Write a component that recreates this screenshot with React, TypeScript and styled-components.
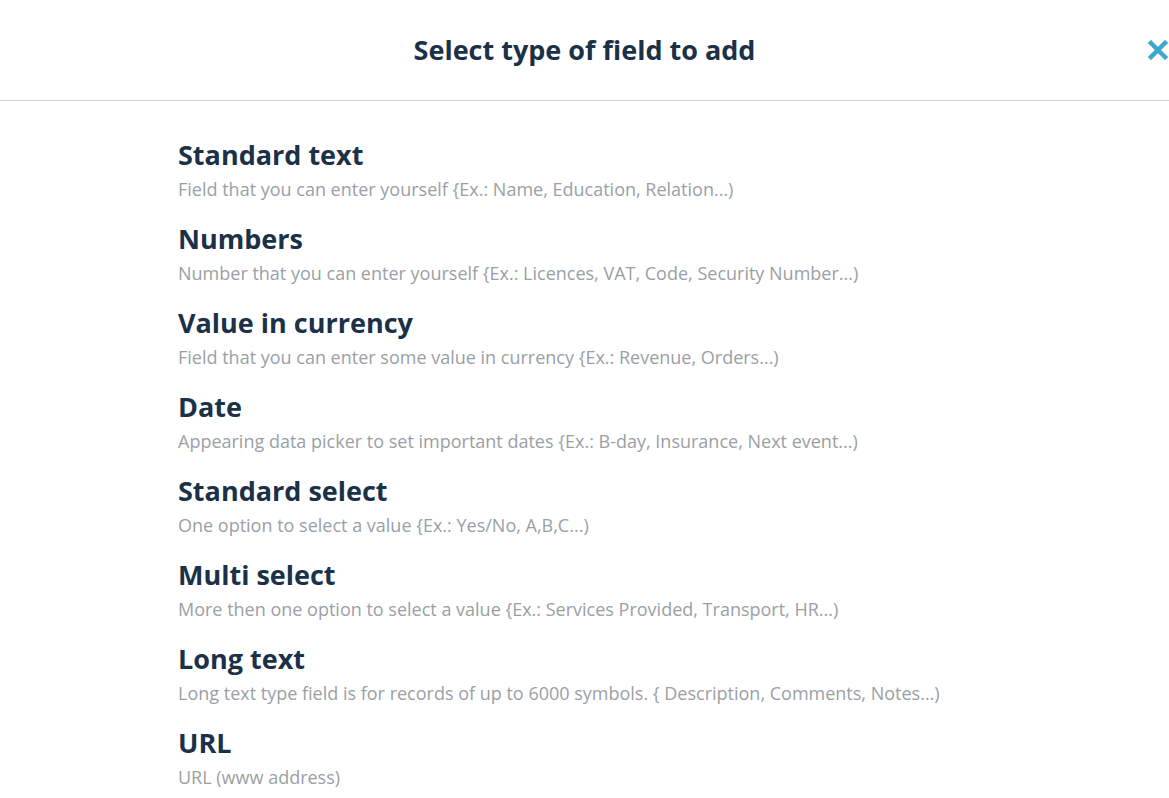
import React from 'react'
import styled, { createGlobalStyle } from 'styled-components'

const Colors = {
  Navy: '#1b3148',
  Grey: '#9a9fa5',
  Line: '#d0d0d0',
  Blue: '#3ea6d1',
  White: '#ffffff',
}

const GlobalStyle = createGlobalStyle`
  html, body {
    margin: 0;
    padding: 0;
    background: ${Colors.White};
    font-family: 'Open Sans', 'Noto Sans', sans-serif;
  }
`

const Page = styled.div`
  width: 1169px;
  height: 798px;
  overflow: hidden;
`

const Header = styled.div`
  position: relative;
  height: 101px;
  border-bottom: 1px solid ${Colors.Line};
  display: flex;
  align-items: center;
  justify-content: center;
  box-sizing: border-box;
`

const Title = styled.h1`
  margin: 0;
  font-size: 27px;
  line-height: 36px;
  font-weight: 700;
  color: ${Colors.Navy};
`

const CloseButton = styled.button`
  position: absolute;
  right: 1px;
  top: 40px;
  width: 20px;
  height: 20px;
  padding: 0;
  border: none;
  background: transparent;
  cursor: pointer;
  display: flex;
`

const List = styled.ul`
  list-style: none;
  margin: 0;
  padding: 36px 0 0 178px;
`

const Item = styled.li`
  margin-bottom: 18px;
  cursor: pointer;
`

const ItemTitle = styled.div`
  font-size: 27px;
  line-height: 36px;
  font-weight: 700;
  color: ${Colors.Navy};
`

const ItemDesc = styled.div`
  margin-top: 3px;
  font-size: 18px;
  line-height: 27px;
  color: ${Colors.Grey};
`

const fields = [
  ['Standard text', 'Field that you can enter yourself {Ex.: Name, Education, Relation...)'],
  ['Numbers', 'Number that you can enter yourself {Ex.: Licences, VAT, Code, Security Number...)'],
  ['Value in currency', 'Field that you can enter some value in currency {Ex.: Revenue, Orders...)'],
  ['Date', 'Appearing data picker to set important dates {Ex.: B-day, Insurance, Next event...)'],
  ['Standard select', 'One option to select a value {Ex.: Yes/No, A,B,C...)'],
  ['Multi select', 'More then one option to select a value {Ex.: Services Provided, Transport, HR...)'],
  ['Long text', 'Long text type field is for records of up to 6000 symbols. { Description, Comments, Notes...)'],
  ['URL', 'URL (www address)'],
]

export default function App() {
  return (
    <Page>
      <GlobalStyle />
      <Header>
        <Title>Select type of field to add</Title>
        <CloseButton aria-label="Close">
          <svg width="20" height="20" viewBox="0 0 20 20">
            <path d="M3 3 L17 17 M17 3 L3 17" stroke={Colors.Blue} strokeWidth="4.5" strokeLinecap="square" />
          </svg>
        </CloseButton>
      </Header>
      <List>
        {fields.map(([name, desc]) => (
          <Item key={name}>
            <ItemTitle>{name}</ItemTitle>
            <ItemDesc>{desc}</ItemDesc>
          </Item>
        ))}
      </List>
    </Page>
  )
}
